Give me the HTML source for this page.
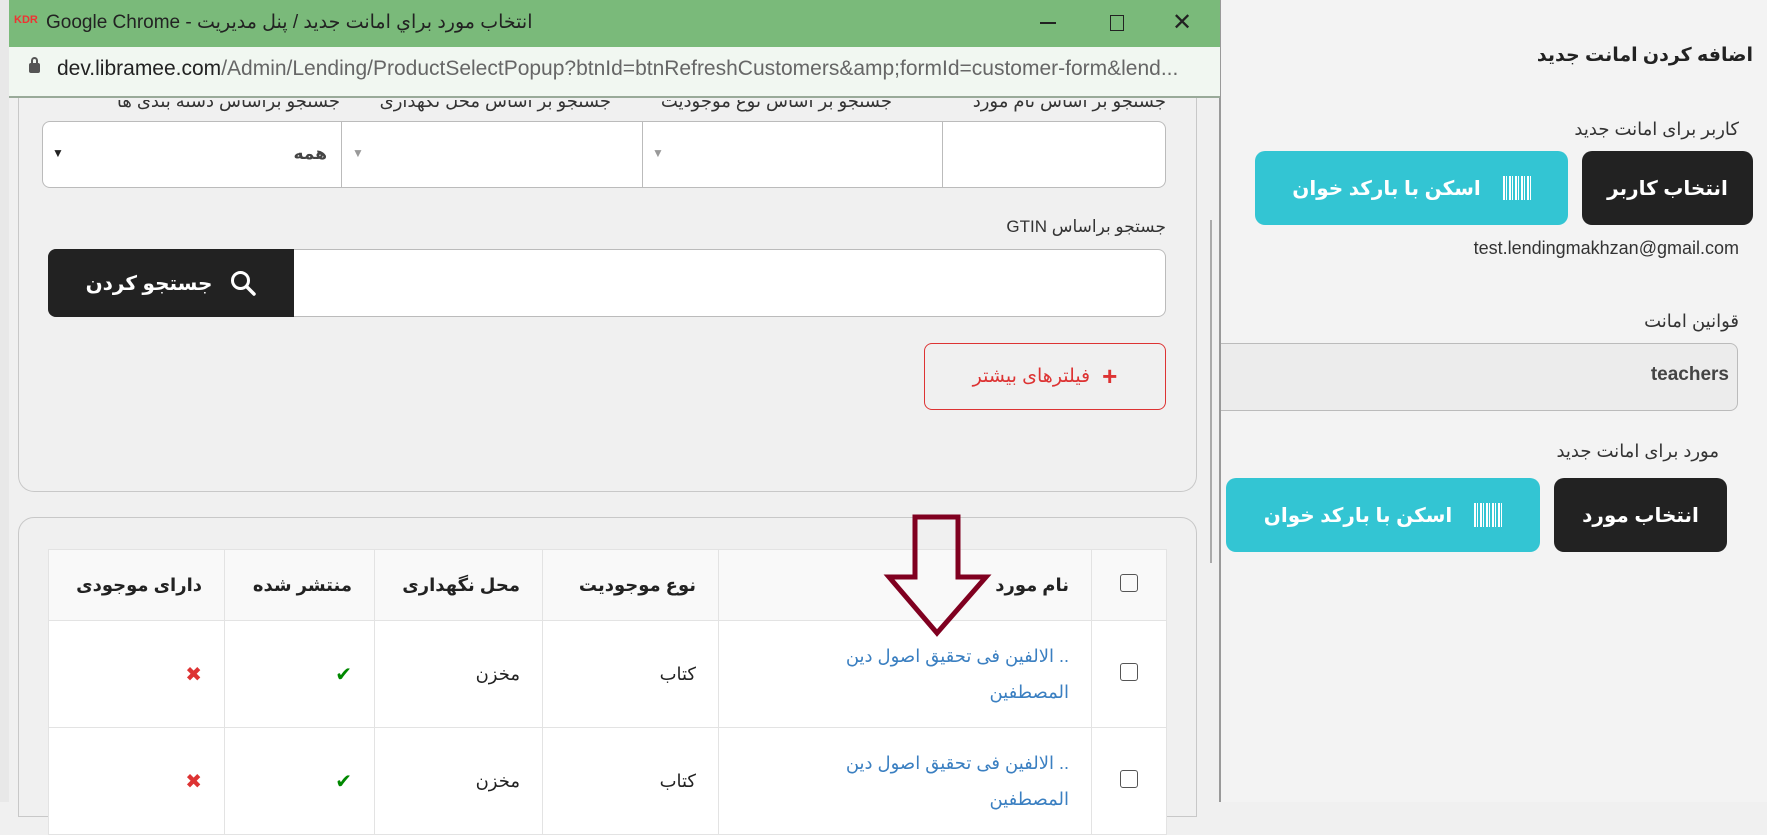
<!DOCTYPE html>
<html><head><meta charset="utf-8">
<style>
*{box-sizing:border-box;margin:0;padding:0}
body{width:1767px;height:802px;overflow:hidden;background:#f0f0f0;font-family:"Liberation Sans","Noto Sans CJK SC","DejaVu Sans",sans-serif;position:relative;color:#222}
.a{position:absolute}
.r{direction:rtl;text-align:right;white-space:nowrap}
.btn{position:absolute;border-radius:10px;color:#fff;font-weight:bold;font-size:20px;display:flex;align-items:center;justify-content:center;direction:rtl;gap:22px}
.blk{background:#222}
.cy{background:#33c5d3}
.bar{width:28px;height:24px;background:repeating-linear-gradient(90deg,#fff 0 2px,transparent 2px 3px,#fff 3px 4px,transparent 4px 6px)}
table{border-collapse:collapse;table-layout:fixed}
td{border:1px solid #e3e3e3;font-size:18px;direction:rtl;text-align:right;padding:0 22px;vertical-align:middle;white-space:nowrap}
.cb{width:18px;height:18px;border:1.5px solid #555;border-radius:3px;display:inline-block}
</style></head><body>
<!-- right pane -->
<div class="a" style="left:1220px;top:0;width:547px;height:802px;background:#f3f3f3"></div>
<div class="a r" style="right:14px;top:44px;font-size:19px;font-weight:bold">اضافه کردن امانت جدید</div>
<div class="a r" style="right:28px;top:119px;font-size:18px;color:#333">کاربر برای امانت جدید</div>
<div class="btn blk" style="left:1582px;top:151px;width:171px;height:74px">انتخاب کاربر</div>
<div class="btn cy" style="left:1255px;top:151px;width:313px;height:74px"><span class="bar"></span><span>اسکن با بارکد خوان</span></div>
<div class="a" style="right:28px;top:238px;font-size:18px;color:#333">test.lendingmakhzan@gmail.com</div>
<div class="a r" style="right:28px;top:311px;font-size:18px;color:#333">قوانین امانت</div>
<div class="a" style="left:1200px;top:343px;width:538px;height:68px;background:#ececec;border:1px solid #bbb;border-radius:8px"></div>
<div class="a" style="right:38px;top:364px;font-size:19px;font-weight:bold;color:#444">teachers</div>
<div class="a r" style="right:48px;top:441px;font-size:18px;color:#333">مورد برای امانت جدید</div>
<div class="btn blk" style="left:1554px;top:478px;width:173px;height:74px">انتخاب مورد</div>
<div class="btn cy" style="left:1226px;top:478px;width:314px;height:74px"><span class="bar"></span><span>اسکن با بارکد خوان</span></div>

<!-- popup -->
<div class="a" style="left:0;top:0;width:1221px;height:802px;background:#f0f0f0;border-left:9px solid #e8e8e8;border-right:2px solid #999"></div>
<div class="a" style="left:9px;top:0;width:1211px;height:47px;background:#7aba7a"></div>
<div class="a" style="left:14px;top:14px;font-size:11px;color:#e33;font-weight:bold">KDR</div>
<div class="a" style="left:46px;top:11px;font-size:19px;color:#222;white-space:nowrap">Google Chrome - <span style="direction:rtl;unicode-bidi:embed">انتخاب مورد براي امانت جديد / پنل مديريت</span></div>
<div class="a" style="left:1040px;top:22px;width:16px;height:1.5px;background:#222"></div>
<div class="a" style="left:1110px;top:15px;width:14px;height:16px;border:1.5px solid #222"></div>
<div class="a" style="left:1172px;top:8px;font-size:24px;color:#222">✕</div>
<div class="a" style="left:9px;top:47px;width:1211px;height:51px;background:#f1f7f1;border-bottom:2px solid #9a9"></div>
<div class="a" style="left:29px;top:63px;width:11px;height:10px;background:#555;border-radius:2px"></div>
<div class="a" style="left:31px;top:57px;width:7px;height:8px;border:2px solid #555;border-bottom:none;border-radius:4px 4px 0 0"></div>
<div class="a" style="left:57px;top:57px;font-size:21px;color:#222;white-space:nowrap">dev.libramee.com<span style="color:#666">/Admin/Lending/ProductSelectPopup?btnId=btnRefreshCustomers&amp;amp;formId=customer-form&amp;lend...</span></div>

<div class="a" style="left:9px;top:100px;width:1200px;height:702px;overflow:hidden">
 <div class="a r" style="right:43px;top:-9px;font-size:18px;color:#333">جستجو بر اساس نام مورد</div>
 <div class="a r" style="right:317px;top:-9px;font-size:18px;color:#333">جستجو بر اساس نوع موجودیت</div>
 <div class="a r" style="right:598px;top:-9px;font-size:18px;color:#333">جستجو بر اساس محل نگهداری</div>
 <div class="a r" style="right:869px;top:-9px;font-size:18px;color:#333">جستجو براساس دسته بندی ها</div>
</div>
<div class="a" style="left:18px;top:98px;width:1179px;height:394px;border:1px solid #c8c8c8;border-top:none;border-radius:0 0 16px 16px"></div>
<div class="a" style="left:42px;top:121px;width:1124px;height:67px;background:#fff;border:1px solid #bbb;border-radius:8px"></div>
<div class="a" style="left:341px;top:121px;width:1px;height:67px;background:#bbb"></div>
<div class="a" style="left:642px;top:121px;width:1px;height:67px;background:#bbb"></div>
<div class="a" style="left:942px;top:121px;width:1px;height:67px;background:#bbb"></div>
<div class="a" style="left:52px;top:146px;font-size:12px">▼</div>
<div class="a" style="left:352px;top:146px;font-size:12px;color:#999">▼</div>
<div class="a" style="left:652px;top:146px;font-size:12px;color:#999">▼</div>
<div class="a r" style="right:1440px;top:144px;font-size:17px;font-weight:bold;color:#444">همه</div>
<div class="a r" style="right:601px;top:217px;font-size:17px;color:#333">جستجو براساس GTIN</div>
<div class="a" style="left:48px;top:249px;width:1118px;height:68px;background:#fff;border:1px solid #bbb;border-radius:8px"></div>
<div class="btn blk" style="left:48px;top:249px;width:246px;height:68px;border-radius:8px 0 0 8px;gap:18px"><svg width="26" height="26" viewBox="0 0 26 26"><circle cx="10.5" cy="10.5" r="8" fill="none" stroke="#fff" stroke-width="3"/><line x1="16.5" y1="16.5" x2="24" y2="24" stroke="#fff" stroke-width="3.5" stroke-linecap="round"/></svg><span>جستجو کردن</span></div>
<div class="a" style="left:924px;top:343px;width:242px;height:67px;border:1px solid #d33;border-radius:8px;display:flex;align-items:center;justify-content:center;direction:rtl;gap:12px;color:#d33;font-size:19px"><span style="font-weight:bold;font-size:26px">+</span><span>فیلترهای بیشتر</span></div>
<div class="a" style="left:1210px;top:220px;width:2px;height:343px;background:#aaa"></div>

<div class="a" style="left:18px;top:517px;width:1179px;height:300px;border:1px solid #c8c8c8;border-radius:16px 16px 0 0"></div>
<table class="a" style="left:48px;top:549px;width:1118px;background:#fff">
<colgroup><col style="width:176px"><col style="width:150px"><col style="width:168px"><col style="width:176px"><col style="width:373px"><col style="width:75px"></colgroup>
<tr style="height:71px;background:#f9f9f9;font-weight:bold">
<td>دارای موجودی</td><td>منتشر شده</td><td>محل نگهداری</td><td>نوع موجودیت</td><td>نام مورد</td><td style="text-align:center"><span class="cb"></span></td></tr>
<tr style="height:107px"><td style="color:#d33;font-size:20px;font-weight:bold">✖</td><td style="color:#080;font-size:20px">✔</td><td>مخزن</td><td>کتاب</td><td style="color:#3a7fc1;line-height:36px">.. الالفين فی تحقيق اصول دين<br>المصطفين</td><td style="text-align:center"><span class="cb"></span></td></tr>
<tr style="height:107px"><td style="color:#d33;font-size:20px;font-weight:bold">✖</td><td style="color:#080;font-size:20px">✔</td><td>مخزن</td><td>کتاب</td><td style="color:#3a7fc1;line-height:36px">.. الالفين فی تحقيق اصول دين<br>المصطفين</td><td style="text-align:center"><span class="cb"></span></td></tr>
</table>
<svg class="a" style="left:880px;top:512px" width="115" height="128" viewBox="0 0 115 128"><path d="M35 5 H78 V65 H106 L57 121 L9 65 H35 Z" fill="none" stroke="#800020" stroke-width="5" stroke-linejoin="miter"/></svg>
</body></html>
